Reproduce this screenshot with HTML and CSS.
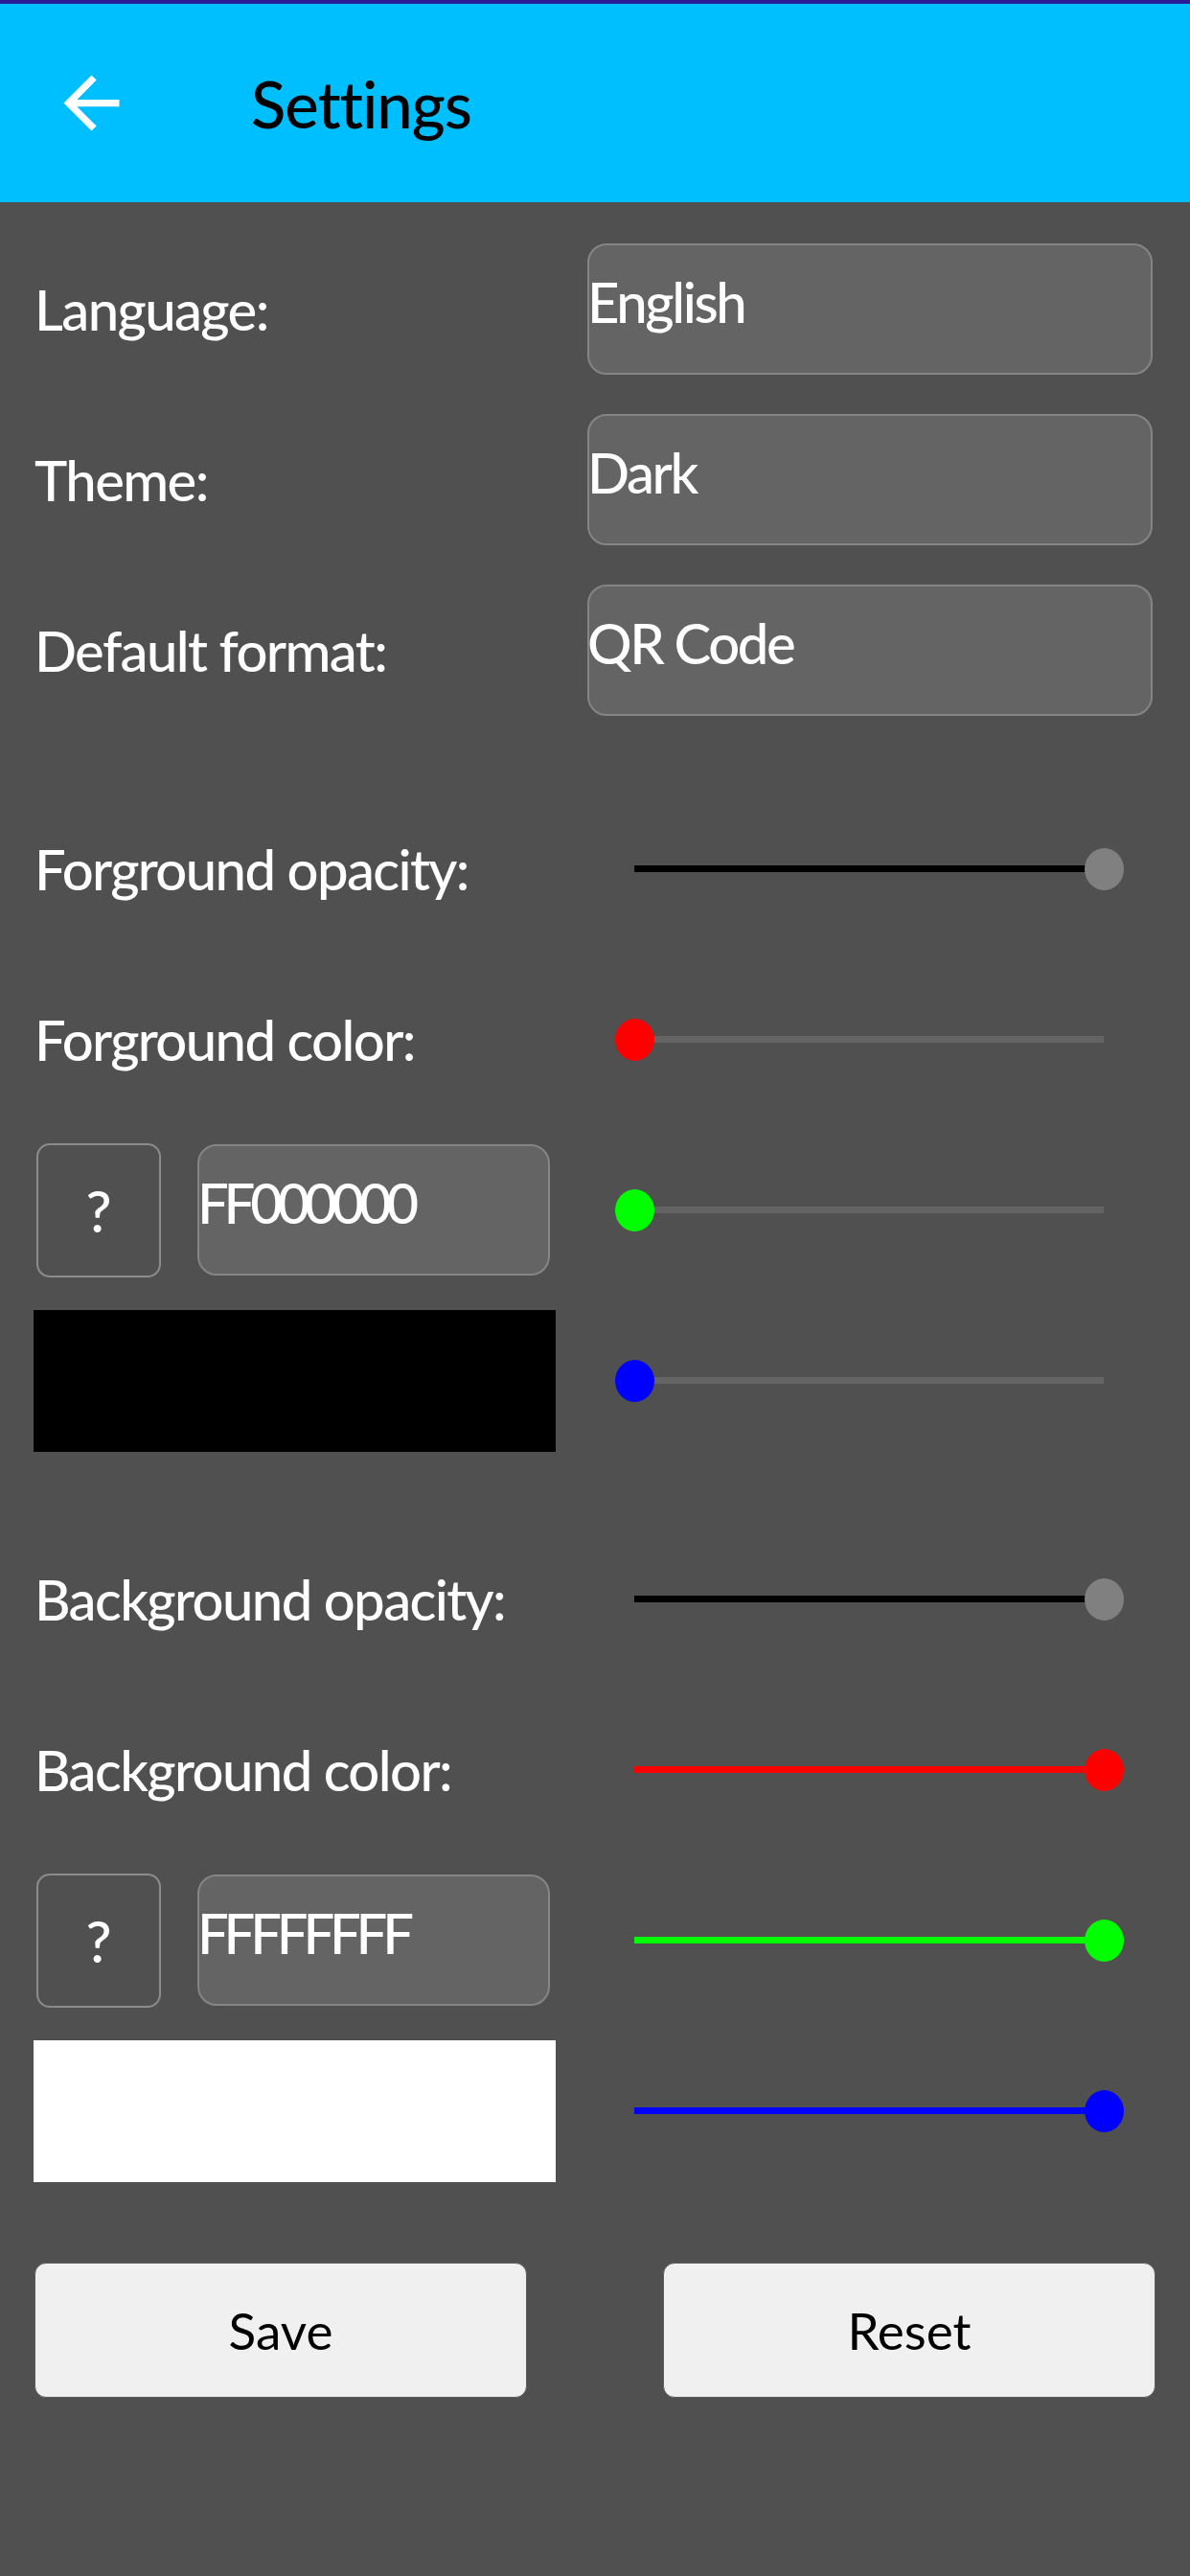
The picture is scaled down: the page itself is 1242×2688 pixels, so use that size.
FILE: index.html
```html
<!DOCTYPE html>
<html lang="en">
<head>
    <meta charset="UTF-8">
    <meta name="viewport" content="width=device-width, initial-scale=1.0">
    <title>Settings</title>
    <link rel="stylesheet" href="styles.css">
</head>
<body>

    <header class="toolbar">
        <button class="back-button" aria-label="Back">
            <svg viewBox="0 0 24 24"><path d="M20 11H7.830l5.590-5.590L12 4l-8 8 8 8 1.410-1.410L7.830 13H20v-2z"/></svg>
        </button>
        <h1>Settings</h1>
    </header>

    <main class="content">
        <!-- General -->
        <section class="group">
            <div class="label">Language:</div>
            <div class="field">English</div>

            <div class="label">Theme:</div>
            <div class="field">Dark</div>

            <div class="label">Default format:</div>
            <div class="field">QR Code</div>
        </section>

        <!-- Foreground -->
        <section class="group">
            <div class="label">Forground opacity:</div>
            <div class="slider opacity">
                <div class="track"><div class="fill" style="width: 100%"></div></div>
                <div class="thumb" style="left: 100%"></div>
            </div>

            <div class="label">Forground color:</div>
            <div class="slider red">
                <div class="track"><div class="fill" style="width: 0%"></div></div>
                <div class="thumb" style="left: 0%"></div>
            </div>

            <div class="hex-row">
                <button class="pick-button">?</button>
                <div class="field hex">FF000000</div>
            </div>
            <div class="slider green">
                <div class="track"><div class="fill" style="width: 0%"></div></div>
                <div class="thumb" style="left: 0%"></div>
            </div>

            <div class="swatch" style="background-color: #000000"></div>
            <div class="slider blue">
                <div class="track"><div class="fill" style="width: 0%"></div></div>
                <div class="thumb" style="left: 0%"></div>
            </div>
        </section>

        <!-- Background -->
        <section class="group">
            <div class="label">Background opacity:</div>
            <div class="slider opacity">
                <div class="track"><div class="fill" style="width: 100%"></div></div>
                <div class="thumb" style="left: 100%"></div>
            </div>

            <div class="label">Background color:</div>
            <div class="slider red">
                <div class="track"><div class="fill" style="width: 100%"></div></div>
                <div class="thumb" style="left: 100%"></div>
            </div>

            <div class="hex-row">
                <button class="pick-button">?</button>
                <div class="field hex">FFFFFFFF</div>
            </div>
            <div class="slider green">
                <div class="track"><div class="fill" style="width: 100%"></div></div>
                <div class="thumb" style="left: 100%"></div>
            </div>

            <div class="swatch" style="background-color: #ffffff"></div>
            <div class="slider blue">
                <div class="track"><div class="fill" style="width: 100%"></div></div>
                <div class="thumb" style="left: 100%"></div>
            </div>
        </section>

        <div class="actions">
            <button class="action-button">Save</button>
            <button class="action-button">Reset</button>
        </div>
    </main>

</body>
</html>
```

FILE: styles.css
```css
body {
    font-family: Lato, "Open Sans", sans-serif;
    background-color: #505050;
    color: #fff;
    margin: 0;
    padding: 0;
    width: 1242px;
    height: 2688px;
    overflow: hidden;
}

/* Toolbar */
.toolbar {
    height: 207px;
    border-top: 4px solid #2c1b97;
    background-color: #00bfff;
    display: flex;
    align-items: center;
}

.back-button {
    width: 87px;
    height: 87px;
    margin-left: 52px;
    padding: 0;
    border: none;
    background: none;
}

.back-button svg {
    display: block;
    width: 87px;
    height: 87px;
    fill: #fff;
}

.toolbar h1 {
    margin: 0 0 0 123px;
    font-size: 67px;
    font-weight: 500;
    letter-spacing: -1px;
    color: #000;
}

/* Content */
.content {
    padding: 43px 36px 0 36px;
}

.group {
    display: grid;
    grid-template-columns: 544px 1fr;
    grid-auto-rows: 137px;
    column-gap: 33px;
    row-gap: 41px;
    align-items: center;
}

.group + .group {
    margin-top: 91px;
}

.label {
    font-size: 58px;
    font-weight: 500;
    line-height: 70px;
    letter-spacing: -1.6px;
}

.field {
    box-sizing: border-box;
    width: 590px;
    height: 137px;
    padding-top: 24px;
    background-color: #646464;
    border: 2px solid #858585;
    border-radius: 20px;
    font-size: 58px;
    font-weight: 500;
    line-height: 70px;
    letter-spacing: -2.4px;
    text-indent: -2px;
}

.field.hex {
    width: 368px;
    letter-spacing: -5.2px;
}

.hex-row {
    display: flex;
    align-items: center;
    gap: 38px;
    padding-left: 2px;
}

.pick-button {
    box-sizing: border-box;
    width: 130px;
    height: 140px;
    border: 2px solid #8c8c8c;
    border-radius: 14px;
    background: none;
    color: #fff;
    font-family: inherit;
    font-size: 60px;
    font-weight: 500;
    padding: 0;
}

.swatch {
    width: 545px;
    height: 148px;
    margin-left: -1px;
}

/* Sliders */
.slider {
    position: relative;
    width: 490px;
    height: 44px;
    margin-left: 49px;
}

.track {
    position: absolute;
    left: 0;
    right: 0;
    top: 18px;
    height: 7px;
    background-color: #646464;
}

.fill {
    height: 100%;
}

.thumb {
    position: absolute;
    top: 0;
    width: 41px;
    height: 44px;
    margin-left: -20px;
    border-radius: 50%;
}

.slider.opacity .fill { background-color: #000; }
.slider.opacity .thumb { background-color: #808080; }
.slider.red .fill,
.slider.red .thumb { background-color: #ff0000; }
.slider.green .fill,
.slider.green .thumb { background-color: #00ff00; }
.slider.blue .fill,
.slider.blue .thumb { background-color: #0000ff; }

/* Buttons */
.actions {
    display: flex;
    justify-content: space-between;
    margin-top: 90px;
}

.action-button {
    width: 514px;
    height: 141px;
    background-color: #f0f0f0;
    border: 1px solid #5e5e5e;
    border-radius: 12px;
    color: #000;
    font-family: inherit;
    font-size: 53px;
}
```
